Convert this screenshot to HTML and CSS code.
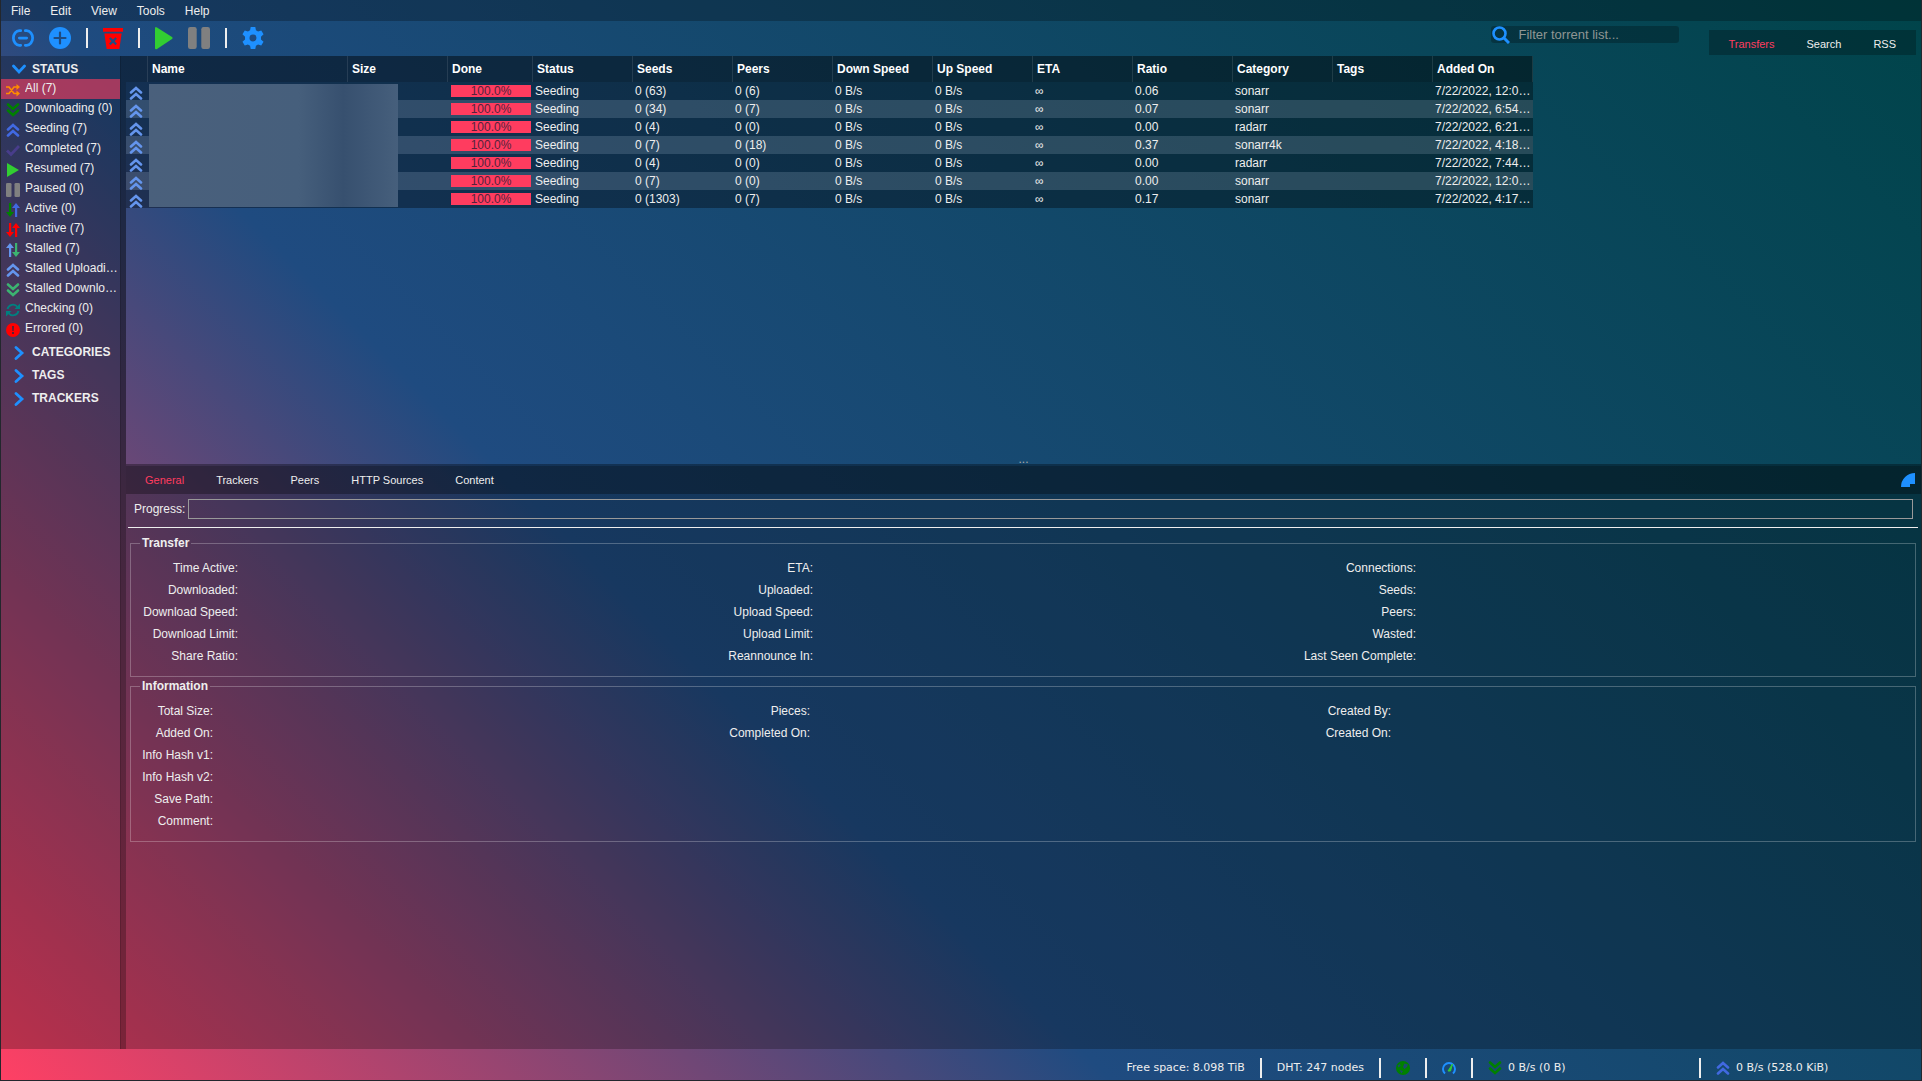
FILE: index.html
```html
<!DOCTYPE html>
<html lang="en">
<head>
<meta charset="utf-8">
<title>qBittorrent Web UI</title>
<link rel="stylesheet" href="styles.css">
</head>
<body>
<svg class="sprite" aria-hidden="true">
  <symbol id="up2" viewBox="0 0 14 14"><path d="M2 6.500 7 2l5 4.500M2 12.500 7 8l5 4.500" fill="none" stroke="currentColor" stroke-width="2.600" stroke-linecap="round"/></symbol>
  <symbol id="down2" viewBox="0 0 14 14"><path d="M2 1.500 7 6l5-4.500M2 7.500 7 12l5-4.500" fill="none" stroke="currentColor" stroke-width="2.600" stroke-linecap="round"/></symbol>
  <symbol id="play" viewBox="0 0 14 14"><path d="M1 0 13 7 1 14Z" fill="currentColor"/></symbol>
  <symbol id="pause" viewBox="0 0 14 14"><rect width="5.500" height="14" rx="1.300" fill="currentColor"/><rect x="8.500" width="5.500" height="14" rx="1.300" fill="currentColor"/></symbol>
  <symbol id="shuffle" viewBox="0 0 14 14"><path d="M0 4h3l5 6.500h3M0 10.500h3L8 4h3" fill="none" stroke="currentColor" stroke-width="1.600"/><path d="m10.500 1 3.500 3-3.500 3ZM10.500 7.500l3.500 3-3.500 3Z" fill="currentColor"/></symbol>
  <symbol id="check" viewBox="0 0 14 14"><path d="m1 7.500 4 4 8-8.500" fill="none" stroke="currentColor" stroke-width="2.800"/></symbol>
  <symbol id="arr-down" viewBox="0 0 14 14"><path d="M3 0h2.200v9H8L4 14 0 9h3Z" fill="currentColor"/></symbol>
  <symbol id="arr-up" viewBox="0 0 14 14"><path d="M9 14h2.200V5H14l-4-5-4 5h3Z" fill="currentColor"/></symbol>
  <symbol id="arr-upl" viewBox="0 0 14 14"><path d="M3 14h2.200V5H8L4 0 0 5h3Z" fill="currentColor"/></symbol>
  <symbol id="arr-downr" viewBox="0 0 14 14"><path d="M9 0h2.200v9H14l-4 5-4-5h3Z" fill="currentColor"/></symbol>
  <symbol id="sync" viewBox="0 0 14 14"><path d="M1.500 6A5.600 5.600 0 0 1 11.500 4M12.500 8A5.600 5.600 0 0 1 2.500 10" fill="none" stroke="currentColor" stroke-width="1.800"/><path d="M14 .5V6H8.500ZM0 13.500V8h5.500Z" fill="currentColor"/></symbol>
  <symbol id="error" viewBox="0 0 14 14"><circle cx="7" cy="7" r="7" fill="currentColor"/><path d="M6 3h2l-.3 5H6.300ZM6 9h2v2H6Z" fill="#5a2036"/></symbol>
  <symbol id="chev" viewBox="0 0 14 14"><path d="m4 1.500 6 5.500-6 5.500" fill="none" stroke="currentColor" stroke-width="2.800" stroke-linecap="round"/></symbol>
  <symbol id="chev-down" viewBox="0 0 14 14"><path d="m1.500 4 5.500 6 5.500-6" fill="none" stroke="currentColor" stroke-width="2.800" stroke-linecap="round"/></symbol>
</svg>

<div class="app">
  <nav class="menubar">
    <a href="#">File</a><a href="#">Edit</a><a href="#">View</a><a href="#">Tools</a><a href="#">Help</a>
  </nav>

  <header class="toolbar">
    <div class="tools">
      <button class="tool blue" aria-label="Add torrent link"><svg viewBox="0 0 24 24"><path d="M9.500 4H8a6.500 8 0 0 0 0 16h1.500M14.500 4H16a6.500 8 0 0 1 0 16h-1.500M8 12h8" fill="none" stroke="currentColor" stroke-width="3" stroke-linecap="round"/></svg></button>
      <button class="tool blue" aria-label="Add torrent file"><svg viewBox="0 0 24 24"><circle cx="12" cy="12" r="12" fill="currentColor"/><path d="M12 6v12M6 12h12" stroke="#1f4b80" stroke-width="2.400" stroke-linecap="round"/></svg></button>
      <span class="rule"></span>
      <button class="tool red" aria-label="Delete"><svg class="w20" viewBox="0 0 22 24"><path d="M0 1h22v4H0ZM1.500 7h19L18 24H4Z" fill="currentColor"/><path d="m7.500 12 7 7M14.500 12l-7 7" stroke="#1f4b80" stroke-width="2.400"/></svg></button>
      <span class="rule"></span>
      <button class="tool green" aria-label="Resume"><svg class="w18" viewBox="0 0 18 22"><path d="M0 1.500Q0-1 2 .5l15 9.500q1.500 1 0 2L2 22q-2 1-2-1Z" fill="currentColor"/></svg></button>
      <button class="tool gray" aria-label="Pause"><svg viewBox="0 0 24 24"><rect width="9.500" height="24" rx="2.500" fill="currentColor"/><rect x="14.500" width="9.500" height="24" rx="2.500" fill="currentColor"/></svg></button>
      <span class="rule"></span>
      <button class="tool blue" aria-label="Options"><svg viewBox="0 0 24 24"><path d="M9.500 0h5l.7 3.600 2.300 1.300 3.500-1.200L23.500 8l-2.800 2.500v3L23.500 16 21 20.300l-3.500-1.200-2.300 1.300-.7 3.600h-5l-.7-3.600-2.300-1.300L3 20.300.5 16l2.800-2.500v-3L.5 8 3 3.700l3.500 1.200 2.300-1.300Z" fill="currentColor"/><circle cx="12" cy="12" r="3.800" fill="#1f4b80"/></svg></button>
    </div>
    <div class="toolbar-right">
      <label class="filter"><svg viewBox="0 0 18 18"><circle cx="7.500" cy="7.500" r="6" fill="none" stroke="currentColor" stroke-width="2.600"/><path d="m12 12 5 5" stroke="currentColor" stroke-width="3"/></svg><input type="text" placeholder="Filter torrent list..." aria-label="Filter torrent list"></label>
      <nav class="tabs main-tabs"><a class="on" href="#">Transfers</a><a href="#">Search</a><a href="#">RSS</a></nav>
    </div>
  </header>

  <div class="body">
    <aside class="sidebar">
      <h2 class="open"><svg><use href="#chev-down"/></svg>STATUS</h2>
      <ul>
        <li class="sel"><a href="#"><svg style="color:#ff8c00"><use href="#shuffle"/></svg><span>All (7)</span></a></li>
        <li><a href="#"><svg style="color:#008000"><use href="#down2"/></svg><span>Downloading (0)</span></a></li>
        <li><a href="#"><svg style="color:#4169e1"><use href="#up2"/></svg><span>Seeding (7)</span></a></li>
        <li><a href="#"><svg style="color:#483d8b"><use href="#check"/></svg><span>Completed (7)</span></a></li>
        <li><a href="#"><svg style="color:#32cd32"><use href="#play"/></svg><span>Resumed (7)</span></a></li>
        <li><a href="#"><svg style="color:#808080"><use href="#pause"/></svg><span>Paused (0)</span></a></li>
        <li><a href="#"><svg><use href="#arr-down" color="#008000"/><use href="#arr-up" color="#4169e1"/></svg><span>Active (0)</span></a></li>
        <li><a href="#"><svg style="color:#ff0000"><use href="#arr-down"/><use href="#arr-up"/></svg><span>Inactive (7)</span></a></li>
        <li><a href="#"><svg><use href="#arr-upl" color="#6495ed"/><use href="#arr-downr" color="#3cb371"/></svg><span>Stalled (7)</span></a></li>
        <li><a href="#"><svg style="color:#6495ed"><use href="#up2"/></svg><span>Stalled Uploading (7)</span></a></li>
        <li><a href="#"><svg style="color:#3cb371"><use href="#down2"/></svg><span>Stalled Downloading (0)</span></a></li>
        <li><a href="#"><svg style="color:#008080"><use href="#sync"/></svg><span>Checking (0)</span></a></li>
        <li><a href="#"><svg style="color:#ff0000"><use href="#error"/></svg><span>Errored (0)</span></a></li>
      </ul>
      <h2><svg><use href="#chev"/></svg>CATEGORIES</h2>
      <h2><svg><use href="#chev"/></svg>TAGS</h2>
      <h2><svg><use href="#chev"/></svg>TRACKERS</h2>
    </aside>
    <div class="splitter"></div>

    <main class="main">
      <section class="torrents">
        <table>
          <colgroup><col class="c-icon"><col class="c-name"><col class="c-size"><col class="c-done"><col class="c"><col class="c"><col class="c"><col class="c"><col class="c"><col class="c"><col class="c"><col class="c"><col class="c"><col class="c"></colgroup>
          <thead><tr><th></th><th>Name</th><th>Size</th><th>Done</th><th>Status</th><th>Seeds</th><th>Peers</th><th>Down Speed</th><th>Up Speed</th><th>ETA</th><th>Ratio</th><th>Category</th><th>Tags</th><th>Added On</th></tr></thead>
          <tbody>
            <tr><td><svg><use href="#up2"/></svg></td><td></td><td></td><td><div class="bar">100.0%</div></td><td>Seeding</td><td>0 (63)</td><td>0 (6)</td><td>0 B/s</td><td>0 B/s</td><td>∞</td><td>0.06</td><td>sonarr</td><td></td><td>7/22/2022, 12:05:10 PM</td></tr>
            <tr><td><svg><use href="#up2"/></svg></td><td></td><td></td><td><div class="bar">100.0%</div></td><td>Seeding</td><td>0 (34)</td><td>0 (7)</td><td>0 B/s</td><td>0 B/s</td><td>∞</td><td>0.07</td><td>sonarr</td><td></td><td>7/22/2022, 6:54:10 AM</td></tr>
            <tr><td><svg><use href="#up2"/></svg></td><td></td><td></td><td><div class="bar">100.0%</div></td><td>Seeding</td><td>0 (4)</td><td>0 (0)</td><td>0 B/s</td><td>0 B/s</td><td>∞</td><td>0.00</td><td>radarr</td><td></td><td>7/22/2022, 6:21:10 AM</td></tr>
            <tr><td><svg><use href="#up2"/></svg></td><td></td><td></td><td><div class="bar">100.0%</div></td><td>Seeding</td><td>0 (7)</td><td>0 (18)</td><td>0 B/s</td><td>0 B/s</td><td>∞</td><td>0.37</td><td>sonarr4k</td><td></td><td>7/22/2022, 4:18:10 AM</td></tr>
            <tr><td><svg><use href="#up2"/></svg></td><td></td><td></td><td><div class="bar">100.0%</div></td><td>Seeding</td><td>0 (4)</td><td>0 (0)</td><td>0 B/s</td><td>0 B/s</td><td>∞</td><td>0.00</td><td>radarr</td><td></td><td>7/22/2022, 7:44:10 AM</td></tr>
            <tr><td><svg><use href="#up2"/></svg></td><td></td><td></td><td><div class="bar">100.0%</div></td><td>Seeding</td><td>0 (7)</td><td>0 (0)</td><td>0 B/s</td><td>0 B/s</td><td>∞</td><td>0.00</td><td>sonarr</td><td></td><td>7/22/2022, 12:05:10 PM</td></tr>
            <tr><td><svg><use href="#up2"/></svg></td><td></td><td></td><td><div class="bar">100.0%</div></td><td>Seeding</td><td>0 (1303)</td><td>0 (7)</td><td>0 B/s</td><td>0 B/s</td><td>∞</td><td>0.17</td><td>sonarr</td><td></td><td>7/22/2022, 4:17:10 AM</td></tr>
          </tbody>
        </table>
        <div class="redacted"></div>
        <div class="grip">...</div>
      </section>

      <section class="details">
        <div class="details-head">
          <nav class="tabs"><a class="on" href="#">General</a><a href="#">Trackers</a><a href="#">Peers</a><a href="#">HTTP Sources</a><a href="#">Content</a></nav>
          <button class="collapse" aria-label="Collapse panel"><svg viewBox="0 0 14 14"><path d="M0 14A14 14 0 0 1 14 0V11H9V14Z" fill="currentColor"/></svg></button>
        </div>
        <div class="progress-row"><span>Progress:</span><div class="progress"></div></div>
        <hr>
        <fieldset class="transfer">
          <legend>Transfer</legend>
          <div class="grid">
            <span>Time Active:</span><span>ETA:</span><span>Connections:</span>
            <span>Downloaded:</span><span>Uploaded:</span><span>Seeds:</span>
            <span>Download Speed:</span><span>Upload Speed:</span><span>Peers:</span>
            <span>Download Limit:</span><span>Upload Limit:</span><span>Wasted:</span>
            <span>Share Ratio:</span><span>Reannounce In:</span><span>Last Seen Complete:</span>
          </div>
        </fieldset>
        <fieldset class="info">
          <legend>Information</legend>
          <div class="grid">
            <span>Total Size:</span><span>Pieces:</span><span>Created By:</span>
            <span>Added On:</span><span>Completed On:</span><span>Created On:</span>
            <span>Info Hash v1:</span><i></i><i></i>
            <span>Info Hash v2:</span><i></i><i></i>
            <span>Save Path:</span><i></i><i></i>
            <span>Comment:</span><i></i><i></i>
          </div>
        </fieldset>
      </section>
    </main>
  </div>

  <footer class="statusbar">
    <span>Free space: 8.098 TiB</span><span class="rule"></span>
    <span>DHT: 247 nodes</span><span class="rule"></span>
    <svg viewBox="0 0 14 14"><circle cx="7" cy="7" r="7" fill="#008000"/><path d="M8.500 2.500l3.500 1-1 2.500-2.500 2-1.500-2ZM3.500 9l3.500 1-1.500 2.500ZM1.500 4.500l2.500-1.500.5 2-2 1.500Z" fill="#1c4a6c"/></svg><span class="rule"></span>
    <svg viewBox="0 0 14 14"><path d="M3 12.500A6 6 0 1 1 11 12.500" fill="none" stroke="#1e90ff" stroke-width="2"/><path d="M6 10 10.500 3 8.500 10Z" fill="#32cd32" stroke="#32cd32"/></svg><span class="rule"></span>
    <span class="speed"><svg style="color:#008000"><use href="#down2"/></svg>0 B/s (0 B)</span><span class="rule"></span>
    <span class="speed"><svg style="color:#4169e1"><use href="#up2"/></svg>0 B/s (528.0 KiB)</span>
  </footer>
</div>
</body>
</html>
```
FILE: styles.css
```css
* { box-sizing: border-box; }
body { margin: 0; background: #23272d; font: 12px/18px "Liberation Sans", Arial, sans-serif; color: #eee; }
a { color: inherit; text-decoration: none; }
button { padding: 0; border: 0; background: none; color: inherit; }
.sprite { position: absolute; width: 0; height: 0; }
svg { display: block; width: 14px; height: 14px; flex: none; }

.app {
  display: flex; flex-direction: column; min-height: 100vh;
  border: 1px solid #23272d; border-top: 0;
  background: linear-gradient(45deg, #ff4064 0%, #1f4b80 37%, #00444a 100%);
}
.menubar { display: flex; gap: 20px; height: 21px; padding: 2px 10px; background: rgba(0, 0, 0, .25); }

.toolbar { display: flex; justify-content: space-between; height: 35px; }
.tools { display: flex; align-items: center; gap: 15px; padding: 0 0 2px 11px; }
.tool svg { width: 22px; height: 22px; overflow: visible; }
.tool .w20 { width: 20px; }
.tool .w18 { width: 18px; }
.blue { color: #1e90ff; }
.red { color: #f00; }
.green { color: #32cd32; }
.gray { color: #808080; }
.rule { width: 2px; height: 20px; background: #eee; }
.toolbar-right { display: flex; gap: 30px; padding-right: 5px; }
.filter { display: flex; align-items: center; gap: 8px; width: 188px; height: 17px; margin-top: 5px; border-radius: 3px; background: rgba(0, 0, 0, .25); color: #1e90ff; }
.filter svg { width: 18px; height: 18px; margin-left: 1px; }
.filter input { flex: 1; min-width: 0; padding: 0; border: 0; background: none; color: #eee; font: 13px/16px "Liberation Sans", Arial, sans-serif; }
.filter input::placeholder { color: #8f9694; }
.tabs { display: flex; gap: 32px; font-size: 11px; font-weight: 500; }
.tabs .on { color: #ff3c5f; }
.main-tabs { height: 25px; margin-top: 9px; padding: 5px 20px 0 19px; background: rgba(0, 0, 0, .25); }

.body { display: flex; flex: 1; }
.sidebar { width: 119px; background: rgba(0, 0, 0, .25); }
.sidebar h2 { display: flex; align-items: center; gap: 6px; height: 23px; margin: 0; padding-left: 11px; font-size: 12px; line-height: 23px; }
.sidebar h2 svg { color: #1e90ff; }
.sidebar .open { padding-top: 3px; }
.sidebar ul { margin: 0 0 2px; padding: 0; list-style: none; }
.sidebar li a { display: flex; align-items: center; gap: 5px; height: 20px; padding: 0 2px 0 5px; }
.sidebar li span { overflow: hidden; height: 20px; text-overflow: ellipsis; white-space: nowrap; }
.sidebar li svg { margin-top: 1px; }
.sidebar .sel { background: rgba(255, 60, 95, .6); }
.splitter { width: 6px; border-left: 1px solid rgba(0, 0, 0, .15); background: rgba(0, 0, 0, .45); }
.main { display: flex; flex: 1; flex-direction: column; min-width: 0; }

.torrents { position: relative; display: flex; flex-direction: column; height: 408px; }
table { width: 1407px; border-collapse: separate; border-spacing: 0; table-layout: fixed; }
.c-icon { width: 22px; }
.c-name { width: 200px; }
.c-size { width: 100px; }
.c-done { width: 85px; }
.c { width: 100px; }
th { height: 26px; padding: 0 4px; border-right: 1px solid rgba(255, 255, 255, .1); background: rgba(0, 0, 0, .45); text-align: left; color: #fff; }
td { height: 18px; padding: 0 2px; overflow: hidden; line-height: 18px; text-overflow: ellipsis; white-space: nowrap; }
tbody tr { background: rgba(0, 0, 0, .35); }
tbody tr:nth-child(even) { background: rgba(78, 82, 88, .44); }
td svg { margin-top: 3px; color: #6495ed; }
td:first-child { padding: 0 3px; }
.bar { height: 12px; margin-left: 1px; background: #ff3c5f; color: #55233c; line-height: 12px; text-align: center; }
.redacted { position: absolute; top: 28px; left: 23px; width: 249px; height: 123px; background: linear-gradient(90deg, #4a607c 0%, #465f7c 60%, #37506f 78%, #465f7c 100%); }
.grip { margin-top: auto; text-align: center; line-height: 10px; color: #aaa; }

.details { flex: 1; background: rgba(0, 0, 0, .25); border-top: 2px solid rgba(0, 0, 0, .1); }
.details-head { display: flex; align-items: center; justify-content: space-between; height: 28px; padding: 0 6px 0 19px; background: rgba(0, 0, 0, .3); }
.collapse { color: #1e90ff; }
.progress-row { display: flex; align-items: center; gap: 3px; padding: 5px 8px 0; }
.progress { flex: 1; height: 20px; border: 1px solid #999; }
hr { height: 1px; margin: 8px 3px 6px 2px; border: 0; background: #eee; }
fieldset { margin: 0 5px 0 4px; padding: 5px 10px 9px; border: 1px solid rgba(255, 255, 255, .25); }
legend { margin-left: -1px; padding: 0 2px; font-weight: bold; }
.grid { display: grid; line-height: 22px; text-align: right; }
.transfer .grid { grid-template-columns: 97px 575px 603px; }
.info .grid { grid-template-columns: 72px 597px 581px; }

.statusbar { display: flex; align-items: center; justify-content: flex-end; gap: 15px; height: 31px; padding: 6px 9px 0 0; font: 11px/18px "DejaVu Sans", Verdana, sans-serif; }
.speed { display: flex; align-items: center; gap: 6px; width: 196px; }
```
